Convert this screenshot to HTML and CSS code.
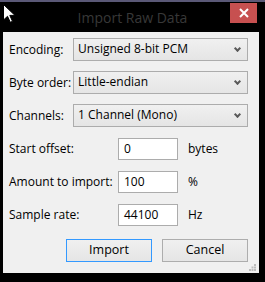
FILE: index.html
```html
<!DOCTYPE html>
<html>
<head>
<meta charset="utf-8">
<title>Import Raw Data</title>
<link rel="stylesheet" href="styles.css">
</head>
<body>
	<div id="fenetre">
		<div class="bord_haut"></div>
		<div class="barre_titre">
			<span class="titre">Import Raw Data</span>
			<a class="fermer" href="#close" title="Fermer">
				<svg width="10" height="10" viewBox="0 0 10 10"><path d="M1 1 L9 9 M9 1 L1 9" stroke="#fff" stroke-width="2"/></svg>
			</a>
		</div>
		<div class="panneau">
			<div class="ligne">
				<label class="lib_liste">Encoding:</label>
				<div class="liste">Unsigned 8-bit PCM<span class="fleche"></span></div>
			</div>
			<div class="ligne">
				<label class="lib_liste">Byte order:</label>
				<div class="liste">Little-endian<span class="fleche"></span></div>
			</div>
			<div class="ligne">
				<label class="lib_liste">Channels:</label>
				<div class="liste">1 Channel (Mono)<span class="fleche"></span></div>
			</div>
			<div class="ligne">
				<label class="lib_saisie">Start offset:</label>
				<div class="saisie">0</div>
				<span class="unite">bytes</span>
			</div>
			<div class="ligne">
				<label class="lib_saisie">Amount to import:</label>
				<div class="saisie">100</div>
				<span class="unite">%</span>
			</div>
			<div class="ligne">
				<label class="lib_saisie">Sample rate:</label>
				<div class="saisie">44100</div>
				<span class="unite">Hz</span>
			</div>
			<div class="boutons">
				<div class="bouton defaut">Import</div>
				<div class="bouton">Cancel</div>
			</div>
			<svg class="poignee" width="7" height="7" viewBox="0 0 7 7">
				<rect x="5" y="0" width="2" height="2" fill="#bcbcbc"/>
				<rect x="2.5" y="2.5" width="2" height="2" fill="#bcbcbc"/>
				<rect x="5" y="2.5" width="2" height="2" fill="#bcbcbc"/>
				<rect x="0" y="5" width="2" height="2" fill="#bcbcbc"/>
				<rect x="2.5" y="5" width="2" height="2" fill="#bcbcbc"/>
				<rect x="5" y="5" width="2" height="2" fill="#bcbcbc"/>
			</svg>
		</div>
		<svg class="curseur" width="13" height="19" viewBox="0 0 13 19">
			<path d="M0.5 0.5 L0.5 16 L4.5 12.3 L7.3 18.3 L9.5 17.3 L6.8 11.4 L12 11.4 Z" fill="#fff" stroke="#000" stroke-width="1"/>
		</svg>
	</div>
</body>
</html>
```

FILE: styles.css
```css
	html, body {
		margin: 0;
		padding: 0;
		background: #000;
	}

	#fenetre {
		position: relative;
		width: 265px;
		height: 282px;
		background: #000;
		font: 12px "Open Sans", "Noto Sans", sans-serif;
		color: #000;
		overflow: hidden;
	}

	.bord_haut {
		height: 2px;
		background: #5b5977;
	}

	.barre_titre {
		height: 30px;
		display: flex;
		align-items: center;
		justify-content: center;
	}

	.titre {
		font-size: 14px;
		color: #383838;
		margin-top: 1px;
	}

	.fermer {
		position: absolute;
		left: 230px;
		top: 3px;
		width: 27px;
		height: 20px;
		background: #c75050;
		display: flex;
		align-items: center;
		justify-content: center;
	}

	.panneau {
		position: relative;
		margin-left: 3px;
		width: 256px;
		height: 241px;
		box-sizing: border-box;
		padding: 6px 11px 0 6px;
		background: #f0f0f0;
		display: flex;
		flex-direction: column;
		gap: 10px;
	}

	.ligne {
		display: flex;
		align-items: center;
		height: 23px;
	}

	.lib_liste {
		width: 66px;
	}

	.lib_saisie {
		width: 109px;
	}

	.liste {
		position: relative;
		width: 180px;
		height: 23px;
		box-sizing: border-box;
		border: 1px solid #acacac;
		padding-left: 4px;
		line-height: 20px;
		background: linear-gradient(to bottom, #f0f0f0, #e5e5e5);
	}

	.fleche {
		position: absolute;
		right: 7px;
		top: 7px;
		width: 3px;
		height: 3px;
		border-right: 2px solid #5a5a5a;
		border-bottom: 2px solid #5a5a5a;
		transform: rotate(45deg);
	}

	.saisie {
		width: 60px;
		height: 22px;
		box-sizing: border-box;
		border: 1px solid #acacac;
		background: #fff;
		padding-left: 5px;
		line-height: 19px;
	}

	.unite {
		margin-left: 10px;
	}

	.boutons {
		display: flex;
		gap: 10px;
		margin-top: 3px;
		padding-left: 57px;
	}

	.bouton {
		width: 86px;
		height: 23px;
		box-sizing: border-box;
		border: 1px solid #adadad;
		background: linear-gradient(to bottom, #f0f0f0, #e5e5e5);
		text-align: center;
		line-height: 20px;
		font-size: 12.5px;
	}

	.bouton.defaut {
		border-color: #3399ff;
	}

	.poignee {
		position: absolute;
		right: 3px;
		bottom: 2px;
	}

	.curseur {
		position: absolute;
		left: 3px;
		top: 4px;
	}
```
